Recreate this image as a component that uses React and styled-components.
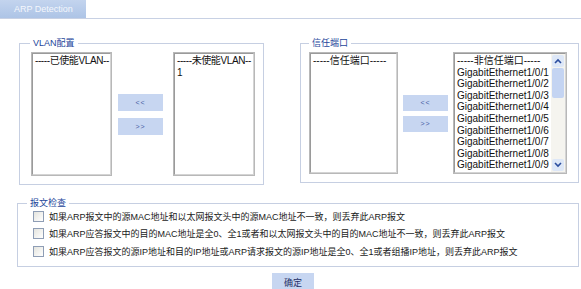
import styled, { createGlobalStyle } from 'styled-components';

const GlobalStyle = createGlobalStyle`
  body {
    margin: 0;
    background: #ffffff;
    font-family: "Liberation Sans", Arial, "Noto Sans CJK SC", sans-serif;
  }
`;

const Page = styled.div`
  width: 581px;
  height: 289px;
  overflow: hidden;
`;

const TabBar = styled.div`
  display: flex;
  height: 18px;
  border-bottom: 1px solid #c8d1e4;
`;

const Tab = styled.div`
  width: 86px;
  display: flex;
  align-items: center;
  padding-left: 14px;
  box-sizing: border-box;
  background: linear-gradient(#c3d4ee, #adc4e6);
  color: #f4f7fc;
  font-size: 9px;
`;

const Content = styled.div`
  padding: 19px 0 0 17px;
`;

const TopRow = styled.div`
  display: flex;
  align-items: flex-start;
  gap: 36px;
  padding-left: 2px;
`;

const Group = styled.fieldset`
  margin: 0;
  padding: ${(p) => p.$pad};
  width: ${(p) => p.$w}px;
  box-sizing: border-box;
  border: 1px solid #c6cfe2;
  min-width: 0;
`;

const Legend = styled.legend`
  margin-left: ${(p) => p.$ml}px;
  padding: 0 3px;
  font-size: 9px;
  line-height: 10px;
  color: #24469a;
`;

const Transfer = styled.div`
  display: flex;
  align-items: center;
`;

const ListBox = styled.div`
  display: flex;
  width: ${(p) => p.$w}px;
  height: ${(p) => p.$h}px;
  box-sizing: border-box;
  border: 2px solid;
  border-color: #9a9a9a #d4d4d4 #d4d4d4 #9a9a9a;
  outline: 1px solid #b8b8b8;
  outline-offset: -1px;
  background: #ffffff;
  overflow: hidden;
`;

const Items = styled.div`
  flex: 1;
  min-width: 0;
  padding: 1px 0 0 2px;
`;

const Item = styled.div`
  font-size: 10px;
  line-height: 11.6px;
  letter-spacing: ${(p) => (p.$tight ? '-0.4px' : '0')};
  color: #111111;
  white-space: nowrap;
`;

const Scrollbar = styled.div`
  width: 14px;
  display: flex;
  flex-direction: column;
  align-items: center;
  background: #f5f4ef;
  padding: 1px 0;
`;

const Arrow = styled.div`
  width: 12px;
  height: 12px;
  border-radius: 2px;
  background: #dde7f7;
  display: flex;
  align-items: center;
  justify-content: center;
`;

const Thumb = styled.div`
  width: 12px;
  height: 30px;
  margin-top: 1px;
  border-radius: 2px;
  background: #c4d4f2;
`;

const Spacer = styled.div`
  flex: 1;
`;

const Moves = styled.div`
  display: flex;
  flex-direction: column;
  gap: ${(p) => p.$gap}px;
  margin: 0 ${(p) => p.$mr}px 0 ${(p) => p.$ml}px;
`;

const MoveButton = styled.button`
  width: 45px;
  height: ${(p) => p.$h}px;
  padding: 0;
  border: none;
  background: #c7d6f1;
  color: #4a5ea6;
  font-family: "Liberation Sans", Arial, sans-serif;
  font-size: 7px;
  letter-spacing: 1px;
`;

const CheckGroup = styled(Group)`
  margin-top: 13px;
`;

const CheckRow = styled.label`
  display: flex;
  align-items: center;
  height: 17.3px;
  padding-left: 15px;
  font-size: 9px;
  color: #1a1a1a;
  white-space: nowrap;
`;

const Box = styled.input.attrs({ type: 'checkbox' })`
  appearance: none;
  width: 11px;
  height: 11px;
  margin: 0 5px 0 0;
  box-sizing: border-box;
  border: 1px solid #8e9db5;
  background: linear-gradient(135deg, #e4e4de, #ffffff);
`;

const Footer = styled.div`
  padding: 5px 0 0 255px;
`;

const OkButton = styled.button`
  width: 42px;
  height: 18px;
  padding: 0;
  border: none;
  background: #c7d6f1;
  color: #1f2f66;
  font-family: "Noto Sans CJK SC", sans-serif;
  font-size: 9px;
`;

const Chevron = ({ up }) => (
  <svg width="8" height="6" viewBox="0 0 8 6">
    <path
      d={up ? 'M1 5 L4 2 L7 5' : 'M1 1 L4 4 L7 1'}
      fill="none"
      stroke="#2b4d9e"
      strokeWidth="1.6"
    />
  </svg>
);

const ports = Array.from({ length: 9 }, (_, i) => `GigabitEthernet1/0/${i + 1}`);

const checks = [
  '如果ARP报文中的源MAC地址和以太网报文头中的源MAC地址不一致，则丢弃此ARP报文',
  '如果ARP应答报文中的目的MAC地址是全0、全1或者和以太网报文头中的目的MAC地址不一致，则丢弃此ARP报文',
  '如果ARP应答报文的源IP地址和目的IP地址或ARP请求报文的源IP地址是全0、全1或者组播IP地址，则丢弃此ARP报文',
];

export default function App() {
  return (
    <Page>
      <GlobalStyle />
      <TabBar>
        <Tab>ARP Detection</Tab>
      </TabBar>
      <Content>
        <TopRow>
          <Group $w={245} $pad="4px 7px 8px 11px">
            <Legend $ml={-1}>VLAN配置</Legend>
            <Transfer>
              <ListBox $w={81} $h={124}>
                <Items>
                  <Item $tight>-----已使能VLAN--</Item>
                </Items>
              </ListBox>
              <Moves $gap={7} $ml={6} $mr={10}>
                <MoveButton $h={17}>&lt;&lt;</MoveButton>
                <MoveButton $h={17}>&gt;&gt;</MoveButton>
              </Moves>
              <ListBox $w={82} $h={124}>
                <Items>
                  <Item $tight>-----未使能VLAN--</Item>
                  <Item>1</Item>
                </Items>
              </ListBox>
            </Transfer>
          </Group>
          <Group $w={279} $pad="4px 10px 8px 8px">
            <Legend $ml={0}>信任端口</Legend>
            <Transfer>
              <ListBox $w={89} $h={122}>
                <Items>
                  <Item>-----信任端口-----</Item>
                </Items>
              </ListBox>
              <Moves $gap={5} $ml={5} $mr={5}>
                <MoveButton $h={16}>&lt;&lt;</MoveButton>
                <MoveButton $h={16}>&gt;&gt;</MoveButton>
              </Moves>
              <ListBox $w={114} $h={122}>
                <Items>
                  <Item>-----非信任端口-----</Item>
                  {ports.map((p) => (
                    <Item key={p}>{p}</Item>
                  ))}
                </Items>
                <Scrollbar>
                  <Arrow>
                    <Chevron up />
                  </Arrow>
                  <Thumb />
                  <Spacer />
                  <Arrow>
                    <Chevron />
                  </Arrow>
                </Scrollbar>
              </ListBox>
            </Transfer>
          </Group>
        </TopRow>
        <CheckGroup $w={562} $pad="0 0 6px 0">
          <Legend $ml={9}>报文检查</Legend>
          {checks.map((c) => (
            <CheckRow key={c}>
              <Box />
              {c}
            </CheckRow>
          ))}
        </CheckGroup>
        <Footer>
          <OkButton>确定</OkButton>
        </Footer>
      </Content>
    </Page>
  );
}
